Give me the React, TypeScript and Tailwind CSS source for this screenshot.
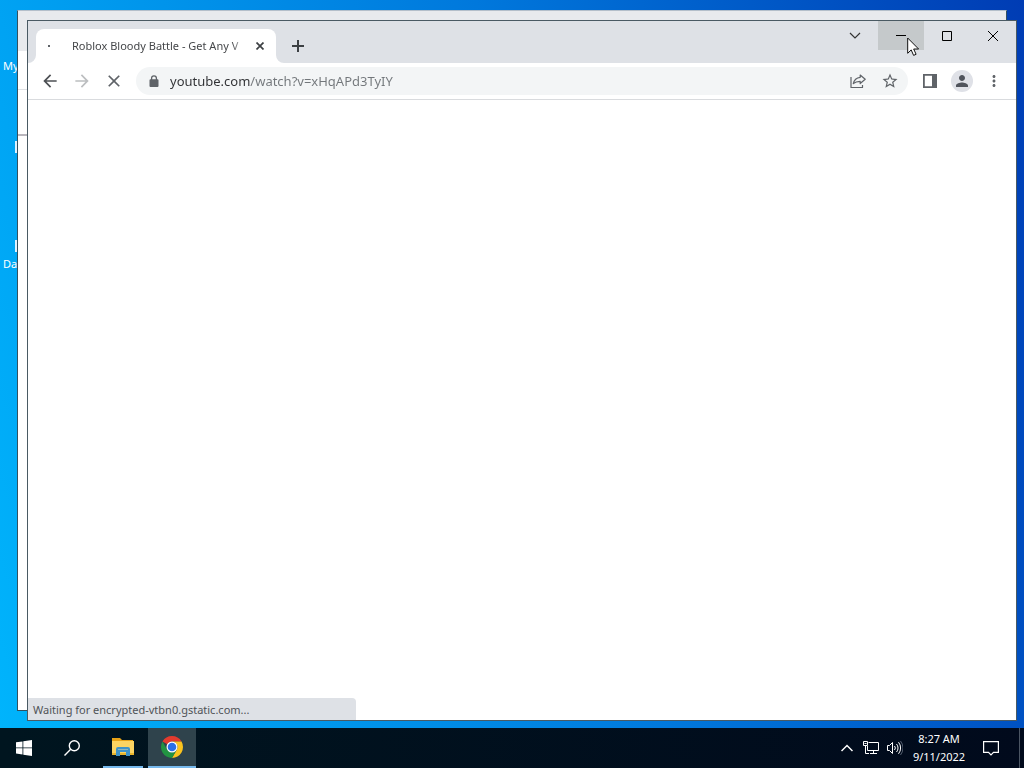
import React, { useState } from 'react';

type IconButtonProps = {
    label: string;
    className?: string;
    children: React.ReactNode;
};

const ToolbarButton: React.FC<IconButtonProps> = ({ label, className = 'text-[#5f6368]', children }) => (
    <button aria-label={label} className={`w-7 h-7 shrink-0 flex items-center justify-center rounded-full ${className}`}>
        {children}
    </button>
);

const CaptionButton: React.FC<IconButtonProps> = ({ label, className = '', children }) => (
    <button aria-label={label} className={`w-[46px] h-[29px] shrink-0 flex items-center justify-center text-black ${className}`}>
        {children}
    </button>
);

const TaskbarButton: React.FC<IconButtonProps> = ({ label, className = '', children }) => (
    <button aria-label={label} className={`h-10 shrink-0 flex items-center justify-center ${className}`}>
        {children}
    </button>
);

// Icons from the 24px material grid
const MaterialIcon: React.FC<{ d: string; size?: number }> = ({ d, size = 18 }) => (
    <svg width={size} height={size} viewBox="0 0 24 24" fill="currentColor">
        <path d={d} />
    </svg>
);

const ChromeLogo = () => (
    <svg width="24" height="24" viewBox="0 0 48 48">
        <path fill="#e33b2e" d="M24 2a22 22 0 0 1 19.05 11H24a11 11 0 0 0-9.53 5.5L4.95 13A22 22 0 0 1 24 2z" />
        <path fill="#fcc31e" d="M43.05 13A22 22 0 0 1 24 46l9.53-16.5A11 11 0 0 0 24 13z" />
        <path fill="#229342" d="M24 46A22 22 0 0 1 4.95 13l9.52 16.5a11 11 0 0 0 19.06 0z" />
        <circle cx="24" cy="24" r="11" fill="#fff" />
        <circle cx="24" cy="24" r="8.6" fill="#2a6fe8" />
    </svg>
);

const FolderIcon = () => (
    <svg width="22" height="20" viewBox="0 0 22 20">
        <path fill="#e8a317" d="M0 1h8l2 2h11v4H0z" />
        <path fill="#fcd462" d="M0 4h22v14H0z" />
        <path fill="#e9b52c" d="M0 16h22v2H0z" />
        <path fill="#3f93c8" d="M4 19v-7a2 2 0 0 1 2-2h10a2 2 0 0 1 2 2v7h-4v-4H8v4z" />
        <path fill="#8fb7bd" d="M6 12h10v1H6z" />
    </svg>
);

const BackWindow = () => (
    <div className="absolute left-[17px] top-2.5 right-[17px] bottom-[17px] bg-white border border-[#33505f] border-t-[#b4bfca] flex flex-col">
        <div className="h-10 bg-[#e8eaed]" />
        <div className="h-[39px] border-b border-[#dfe1e4]" />
        <div className="h-[46px] border-b-2 border-[#b9b6bd]" />
    </div>
);

const TabStrip = () => (
    <div className="h-[42px] bg-[#dee1e6] flex items-start">
        <div className="self-end flex items-end">
            <svg width="8" height="8" viewBox="0 0 8 8" fill="#fff">
                <path d="M8 0v8H0a8 8 0 0 0 8-8z" />
            </svg>
            <div className="w-60 h-[34px] bg-white rounded-t-lg flex items-center pl-3 pr-2">
                <span className="w-0.5 h-0.5 bg-[#5f6368] shrink-0" />
                <span className="ml-[22px] flex-1 overflow-hidden whitespace-nowrap text-[11px] leading-4 text-[#45474a] mask-r-from-92%">
                    Roblox Bloody Battle - Get Any V
                </span>
                <button aria-label="Close tab" className="w-4 h-4 ml-1.5 shrink-0 flex items-center justify-center text-[#3c4043]">
                    <svg width="8" height="8" viewBox="0 0 8 8" stroke="currentColor" strokeWidth="1.7">
                        <path d="M0.5 0.5l7 7M7.5 0.5l-7 7" />
                    </svg>
                </button>
            </div>
            <svg width="8" height="8" viewBox="0 0 8 8" fill="#fff">
                <path d="M0 0v8h8a8 8 0 0 1-8-8z" />
            </svg>
            <button aria-label="New tab" className="w-7 h-7 mb-[3px] flex items-center justify-center text-[#3c4043]">
                <svg width="12" height="12" viewBox="0 0 12 12" stroke="currentColor" strokeWidth="2">
                    <path d="M6 0v12M0 6h12" />
                </svg>
            </button>
        </div>
        <div className="ml-auto flex">
            <CaptionButton label="Search tabs">
                <svg width="12" height="8" viewBox="0 0 12 8" fill="none" stroke="#333" strokeWidth="1.2">
                    <path d="M1 1l5 5 5-5" />
                </svg>
            </CaptionButton>
            <CaptionButton label="Minimize" className="bg-[#c5c9cb]">
                <svg width="10" height="10" viewBox="0 0 10 10" stroke="currentColor">
                    <path d="M0 4.5h10" />
                </svg>
            </CaptionButton>
            <CaptionButton label="Maximize">
                <svg width="10" height="10" viewBox="0 0 10 10" fill="none" stroke="currentColor">
                    <path d="M0.5 0.5h9v9h-9z" />
                </svg>
            </CaptionButton>
            <CaptionButton label="Close">
                <svg width="10" height="10" viewBox="0 0 10 10" stroke="currentColor">
                    <path d="M0 0l10 10M10 0L0 10" />
                </svg>
            </CaptionButton>
        </div>
    </div>
);

const Toolbar = () => {
    const [url, setUrl] = useState('youtube.com/watch?v=xHqAPd3TyIY');

    return (
        <div className="h-[37px] border-b border-[#d9dbde] flex items-center gap-1 px-2">
            <ToolbarButton label="Back" className="text-[#4d5054]">
                <MaterialIcon size={20} d="M20 11H7.83l5.59-5.59L12 4l-8 8 8 8 1.41-1.41L7.83 13H20v-2z" />
            </ToolbarButton>
            <ToolbarButton label="Forward" className="text-[#bcbec0]">
                <MaterialIcon size={20} d="M12 4l-1.41 1.41L16.17 11H4v2h12.17l-5.58 5.59L12 20l8-8-8-8z" />
            </ToolbarButton>
            <ToolbarButton label="Stop loading">
                <MaterialIcon size={20} d="M19 6.41L17.59 5 12 10.59 6.41 5 5 6.41 10.59 12 5 17.59 6.41 19 12 13.41 17.59 19 19 17.59 13.41 12z" />
            </ToolbarButton>
            <div className="flex-1 h-7 mx-1 px-1 bg-[#f3f5f6] rounded-full flex items-center gap-1">
                <ToolbarButton label="Site information">
                    <svg width="10" height="12" viewBox="0 0 10 12">
                        <path fill="none" stroke="currentColor" strokeWidth="1.3" d="M2.6 5V3.2a2.4 2.4 0 0 1 4.8 0V5" />
                        <path fill="currentColor" d="M1.5 4.3h7a1 1 0 0 1 1 1V11a1 1 0 0 1-1 1h-7a1 1 0 0 1-1-1V5.3a1 1 0 0 1 1-1z" />
                    </svg>
                </ToolbarButton>
                <input
                    aria-label="Address"
                    value={url}
                    onChange={(e) => setUrl(e.target.value)}
                    className="-ml-0.5 flex-1 min-w-0 text-[13px] leading-5 outline-none text-transparent bg-clip-text bg-linear-to-r from-[#303134] from-[80px] to-[#73777b] to-[80px]"
                />
                <ToolbarButton label="Share">
                    <svg width="16" height="16" viewBox="0 0 16 16" fill="none" stroke="currentColor" strokeWidth="1.2" strokeLinejoin="round">
                        <path d="M1 4v10.500h11.500V12" />
                        <path d="M10.200 2l5 4.300-5 4.200V8.300c-3 0-5.200.7-6.900 2.400.7-3.400 2.900-6 6.900-6.400z" />
                    </svg>
                </ToolbarButton>
                <ToolbarButton label="Bookmark this tab">
                    <MaterialIcon d="M22 9.24l-7.19-.62L12 2 9.19 8.63 2 9.24l5.46 4.73L5.82 21 12 17.27 18.18 21l-1.63-7.03L22 9.24zM12 15.4l-3.76 2.27 1-4.28-3.32-2.88 4.38-.38L12 6.1l1.71 4.04 4.38.38-3.32 2.88 1 4.28L12 15.4z" />
                </ToolbarButton>
            </div>
            <ToolbarButton label="Side panel">
                <svg width="14" height="14" viewBox="0 0 14 14">
                    <path fill="none" stroke="currentColor" strokeWidth="1.8" d="M.9.9h12.2v12.2H.9z" />
                    <path fill="currentColor" d="M9 1h5v12H9z" />
                </svg>
            </ToolbarButton>
            <ToolbarButton label="Profile" className="text-[#50545c]">
                <span className="w-[22px] h-[22px] rounded-full bg-[#dfe1e7] flex items-center justify-center">
                    <MaterialIcon d="M12 12c2.21 0 4-1.79 4-4s-1.79-4-4-4-4 1.79-4 4 1.79 4 4 4zm0 2c-2.67 0-8 1.34-8 4v2h16v-2c0-2.66-5.33-4-8-4z" />
                </span>
            </ToolbarButton>
            <ToolbarButton label="Menu">
                <MaterialIcon d="M12 8c1.1 0 2-.9 2-2s-.9-2-2-2-2 .9-2 2 .9 2 2 2zm0 2c-1.1 0-2 .9-2 2s.9 2 2 2 2-.9 2-2-.9-2-2-2zm0 6c-1.1 0-2 .9-2 2s.9 2 2 2 2-.9 2-2-.9-2-2-2z" />
            </ToolbarButton>
        </div>
    );
};

const BrowserWindow = () => (
    <div className="absolute left-[27px] top-5 right-[7px] bottom-[7px] bg-white border border-[#4a5a63] flex flex-col">
        <TabStrip />
        <Toolbar />
        <main className="flex-1 flex items-end">
            <div role="status" className="w-[328px] h-[22px] pl-[5px] rounded-tr bg-[#dee1e6] text-[11px] leading-6 text-[#505357]">
                Waiting for encrypted-vtbn0.gstatic.com...
            </div>
        </main>
    </div>
);

const DesktopIcons = () => (
    <div className="absolute left-[3px] top-0 w-16 flex flex-col text-[11px] leading-4 text-white">
        <span className="mt-[58px]">My PC</span>
        <span className="mt-[67px] ml-3 w-6 h-3 bg-[#dff2ff]" />
        <span className="mt-[87px] ml-3 w-6 h-3 bg-[#dff2ff]" />
        <span className="mt-1">Data</span>
    </div>
);

const Taskbar = () => (
    <footer className="h-10 bg-linear-to-r from-[#00151f] to-[#010a1c] flex items-center text-white">
        <TaskbarButton label="Start" className="w-12">
            <svg width="16" height="16" viewBox="0 0 16 16" fill="currentColor">
                <path d="M0 2.3l6.5-.9v6.1H0zM7.3 1.3L16 0v7.5H7.3zM0 8.3h6.5v6.2L0 13.6zM7.3 8.3H16V16l-8.7-1.3z" />
            </svg>
        </TaskbarButton>
        <TaskbarButton label="Search" className="w-12">
            <svg width="16" height="16" viewBox="0 0 16 16" fill="none" stroke="currentColor" strokeWidth="1.4">
                <circle cx="10.3" cy="5.7" r="5" />
                <path d="M6.7 9.3L.5 15.5" />
            </svg>
        </TaskbarButton>
        <TaskbarButton label="File Explorer" className="w-10 ml-[7px] border-b-2 border-[#76b9ed]">
            <FolderIcon />
        </TaskbarButton>
        <TaskbarButton label="Google Chrome" className="w-12 ml-[5px] bg-[#2f434c] border-b-2 border-[#76b9ed]">
            <ChromeLogo />
        </TaskbarButton>
        <div className="ml-auto flex items-center">
            <TaskbarButton label="Show hidden icons" className="w-6">
                <svg width="12" height="8" viewBox="0 0 12 8" fill="none" stroke="currentColor" strokeWidth="1.5">
                    <path d="M.5 7L6 1.5 11.5 7" />
                </svg>
            </TaskbarButton>
            <TaskbarButton label="Network" className="w-6">
                <svg width="16" height="14" viewBox="0 0 16 14" fill="none" stroke="currentColor">
                    <path d="M5.5 1.5h10v8h-11V5M10.5 9.5v3M7 12.5h7M.5.5h4v4h-4zM2.5 4.5v8H6M1.5 2.5h2" />
                </svg>
            </TaskbarButton>
            <TaskbarButton label="Volume" className="w-6">
                <svg width="16" height="14" viewBox="0 0 16 14" fill="none" stroke="currentColor">
                    <path d="M.5 4.5h2l3-3v11l-3-3h-2zM7.5 5a3 3 0 0 1 0 4M9.5 3a6 6 0 0 1 0 8" />
                    <path d="M11.5 1.2a9 9 0 0 1 0 11.6" />
                    <path stroke="#566070" d="M13.5 0a11 11 0 0 1 0 14" />
                </svg>
            </TaskbarButton>
            <button className="w-16 h-10 text-[11px] leading-[18px] text-center whitespace-nowrap">
                <span className="block">8:27 AM</span>
                <span className="block">9/11/2022</span>
            </button>
            <TaskbarButton label="Notifications" className="w-10">
                <svg width="16" height="16" viewBox="0 0 16 16" fill="none" stroke="currentColor" strokeWidth="1.2">
                    <path d="M.6 1.6h14.8v10.8H10.5L8 15l-2.5-2.6H.6z" />
                </svg>
            </TaskbarButton>
            <button aria-label="Show desktop" className="w-[5px] h-10 ml-2 border-l border-[#4b5563]" />
        </div>
    </footer>
);

const App: React.FC = () => (
    <div className="min-h-screen flex flex-col overflow-hidden font-['Noto_Sans','Open_Sans',sans-serif]">
        <div className="flex-1 relative bg-linear-[75deg] from-[#00b4fc] via-[#0078dc] via-55% to-[#003cb4]">
            <DesktopIcons />
            <BackWindow />
            <BrowserWindow />
            {/* Mouse pointer */}
            <svg className="absolute left-[907px] top-[37px]" width="13" height="20" viewBox="0 0 13 20">
                <path fill="#fff" stroke="#111" d="M.7 1v15.3l3.500-3.400 2.400 5.500 2.500-1.100-2.400-5.300h4.900z" />
            </svg>
        </div>
        <Taskbar />
    </div>
);

export default App;
